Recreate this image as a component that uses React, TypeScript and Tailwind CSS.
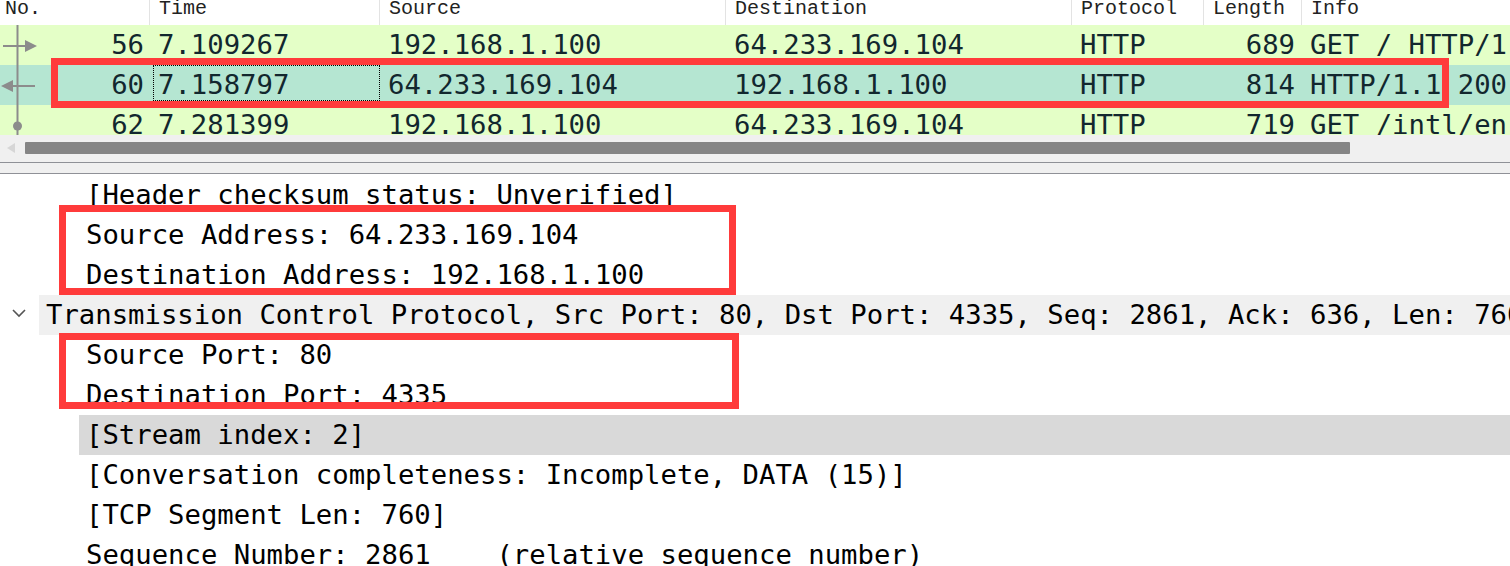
const mono = "font-['DejaVu_Sans_Mono',monospace] text-[27.27px] leading-[40px] whitespace-pre";

type Mark = "out" | "in" | "end";

interface Packet {
  no: string;
  time: string;
  src: string;
  dst: string;
  proto: string;
  len: string;
  info: string;
  bg: string;
  mark: Mark;
  focus?: boolean;
}

const packets: Packet[] = [
  {
    no: "56",
    time: "7.109267",
    src: "192.168.1.100",
    dst: "64.233.169.104",
    proto: "HTTP",
    len: "689",
    info: "GET / HTTP/1.1",
    bg: "bg-[#e4ffc7]",
    mark: "out",
  },
  {
    no: "60",
    time: "7.158797",
    src: "64.233.169.104",
    dst: "192.168.1.100",
    proto: "HTTP",
    len: "814",
    info: "HTTP/1.1 200 OK  (text/html)",
    bg: "bg-[#b5e6d2]",
    mark: "in",
    focus: true,
  },
  {
    no: "62",
    time: "7.281399",
    src: "192.168.1.100",
    dst: "64.233.169.104",
    proto: "HTTP",
    len: "719",
    info: "GET /intl/en_ALL/images/logo.gif HTTP/1.1",
    bg: "bg-[#e4ffc7]",
    mark: "end",
  },
];

const headers = ["No.", "Time", "Source", "Destination", "Protocol", "Length", "Info"];

const RelationMark = ({ mark }: { mark: Mark }) => (
  <svg width="40" height="40" viewBox="0 0 40 40" className="shrink-0">
    <line x1="17.5" y1="0" x2="17.5" y2="40" stroke="#8c8c8c" strokeWidth="2" />
    {mark === "out" && (
      <>
        <line x1="3" y1="21" x2="27" y2="21" stroke="#8c8c8c" strokeWidth="2" />
        <polygon points="25,15 37,21 25,27" fill="#8c8c8c" />
      </>
    )}
    {mark === "in" && (
      <>
        <line x1="12" y1="21" x2="35" y2="21" stroke="#8c8c8c" strokeWidth="2" />
        <polygon points="1,21 13,15 13,27" fill="#8c8c8c" />
      </>
    )}
    {mark === "end" && <circle cx="17.5" cy="21" r="4.5" fill="#8c8c8c" />}
  </svg>
);

const RedBox = ({ className }: { className: string }) => (
  <div className={`pointer-events-none absolute border-[7px] border-[#ff3b3b] ${className}`} />
);

const grid = "grid grid-cols-[150px_230px_346px_346px_132px_98px_minmax(0,1fr)]";

const PacketList = () => (
  <div className="relative">
    <div className={`${grid} h-[25px] bg-white`}>
      {headers.map((h, i) => (
        <div
          key={h}
          className={`overflow-hidden whitespace-nowrap font-['Liberation_Mono',monospace] text-[20px] leading-[17px] text-[#222] ${
            i === 0 ? "pl-[5px]" : "pl-[9px]"
          } ${i < headers.length - 1 ? "border-r border-[#e3e3e3]" : ""}`}
        >
          {h}
        </div>
      ))}
    </div>
    <div className="h-[110px] overflow-hidden">
      {packets.map(p => (
        <div key={p.no} className={`${grid} h-[40px] ${p.bg} text-[#12272e] ${mono}`}>
          <div className="flex justify-between pr-[6px]">
            <RelationMark mark={p.mark} />
            <span>{p.no}</span>
          </div>
          {p.focus ? (
            <div className="pl-[3px]">
              <div className="h-[36px] border border-dotted border-black pl-[4px] leading-[38px]">{p.time}</div>
            </div>
          ) : (
            <div className="pl-[8px]">{p.time}</div>
          )}
          <div className="pl-[8px]">{p.src}</div>
          <div className="pl-[8px]">{p.dst}</div>
          <div className="pl-[8px]">{p.proto}</div>
          <div className="pr-[7px] text-right">{p.len}</div>
          <div className="overflow-hidden pl-[8px]">{p.info}</div>
        </div>
      ))}
    </div>
    <div className="flex h-[27px] items-start bg-[#f0f0f0]">
      <svg width="25" height="27" viewBox="0 0 25 27" className="shrink-0">
        <polygon points="7,13 15,8 15,18" fill="#d6d6d6" />
      </svg>
      <div className="mt-[7px] h-[12px] w-[1325px] rounded-[1px] bg-[#858585]" />
    </div>
    <div className="h-px bg-[#8f9197]" />
    <div className="h-[10px] bg-[#f0f0f0]" />
    <div className="h-px bg-[#8f9197]" />
    <RedBox className="left-[51px] top-[58px] h-[50px] w-[1398px]" />
  </div>
);

const Leaf = ({ text, selected }: { text: string; selected?: boolean }) => (
  <div className="h-[40px] pl-[79px]">
    <div className={`h-full pl-[7px] text-black ${mono} ${selected ? "bg-[#d9d9d9]" : ""}`}>{text}</div>
  </div>
);

const Branch = ({ text }: { text: string }) => (
  <div className="flex h-[40px]">
    <svg width="39" height="40" viewBox="0 0 39 40" className="shrink-0">
      <polyline points="13,15 19,21 25,15" fill="none" stroke="#555" strokeWidth="1.6" />
    </svg>
    <div className={`min-w-0 flex-1 overflow-hidden bg-[#f0f0f0] pl-[7px] text-black ${mono}`}>{text}</div>
  </div>
);

const DetailPane = () => (
  <div className="relative bg-white pt-px">
    <Leaf text="[Header checksum status: Unverified]" />
    <Leaf text="Source Address: 64.233.169.104" />
    <Leaf text="Destination Address: 192.168.1.100" />
    <Branch text="Transmission Control Protocol, Src Port: 80, Dst Port: 4335, Seq: 2861, Ack: 636, Len: 760" />
    <Leaf text="Source Port: 80" />
    <Leaf text="Destination Port: 4335" />
    <Leaf text="[Stream index: 2]" selected />
    <Leaf text="[Conversation completeness: Incomplete, DATA (15)]" />
    <Leaf text="[TCP Segment Len: 760]" />
    <Leaf text="Sequence Number: 2861    (relative sequence number)" />
    <RedBox className="left-[59px] top-[31px] h-[90px] w-[677px]" />
    <RedBox className="left-[59px] top-[159px] h-[76px] w-[680px]" />
  </div>
);

export default function App() {
  return (
    <div className="h-[566px] w-[1510px] overflow-hidden bg-white">
      <PacketList />
      <DetailPane />
    </div>
  );
}
